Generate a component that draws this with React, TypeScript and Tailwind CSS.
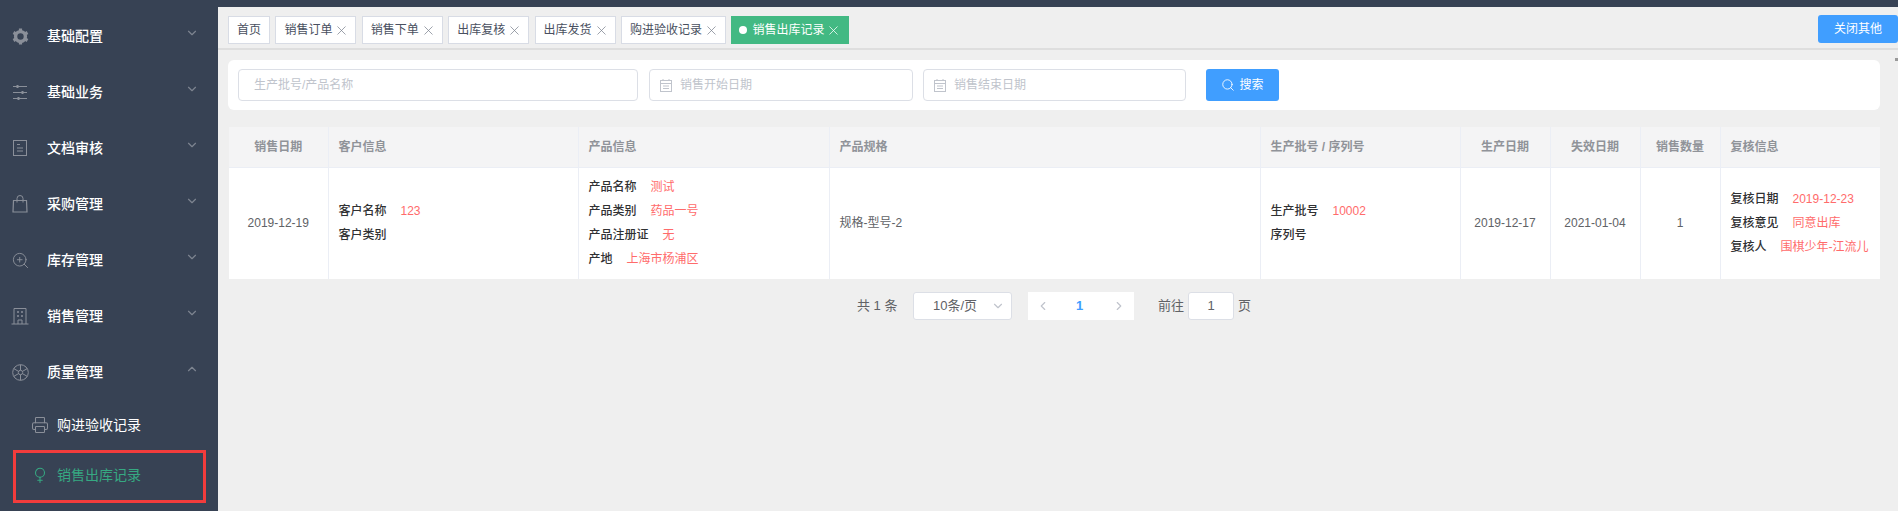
import React from 'react';
import { ChevronDown, ChevronUp, ChevronLeft, ChevronRight, X, Search, ZoomIn, Printer, Venus } from 'lucide-react';

const iconColor = '#8a8f99';

const GearIcon = () => (
  <svg width="17" height="17" viewBox="0 0 17 17" fill="none" stroke={iconColor}>
    <circle cx="8.5" cy="8.5" r="4.9" strokeWidth="3.4" />
    <path d="M8.500 0.500v2.500M8.500 14v2.500M1.500 4.500l2.200 1.300M13.300 11.200l2.200 1.300M1.500 12.500l2.200-1.300M13.300 5.800l2.200-1.300" strokeWidth="3.2" />
  </svg>
);

const SlidersIcon = () => (
  <svg width="16" height="16" viewBox="0 0 16 16" fill="none" stroke={iconColor} strokeWidth="1">
    <path d="M1 2.500h14M1 8.500h14M1 14.500h14" />
    <path d="M5.500 1v3M10.500 7v3M6.500 13v3" strokeWidth="2" />
  </svg>
);

const DocIcon = () => (
  <svg width="16" height="16" viewBox="0 0 16 16" fill="none" stroke={iconColor} strokeWidth="1">
    <rect x="1.500" y="0.500" width="13" height="15" />
    <path d="M5 4.500h3M5 8h6M5 11h6" />
  </svg>
);

const BagIcon = () => (
  <svg width="16" height="18" viewBox="0 0 16 18" fill="none" stroke={iconColor} strokeWidth="1.200">
    <path d="M1.500 5.500h13l.5 11.500H1z" />
    <path d="M5 7.500V3.500a3 3 0 0 1 6 0v4" strokeWidth="1" />
  </svg>
);

const BuildingIcon = () => (
  <svg width="18" height="18" viewBox="0 0 18 18" fill="none" stroke={iconColor} strokeWidth="1">
    <path d="M3 17V1.500h12V17M0.500 17h17M7 17v-4h4v4" />
    <path d="M6 5h2M10 5h2M6 9h2M10 9h2" strokeWidth="1.600" />
  </svg>
);

const WheelIcon = () => (
  <svg width="17" height="17" viewBox="0 0 17 17" fill="none" stroke={iconColor} strokeWidth="1">
    <circle cx="8.500" cy="8.500" r="7.800" />
    <circle cx="8.500" cy="8.500" r="2.200" />
    <path d="M8.500 0.700v5.600M8.500 10.700v5.600M1.700 4.600l4.900 2.800M10.400 9.600l4.900 2.800M1.700 12.400l4.900-2.800M10.400 7.400l4.900-2.800" />
  </svg>
);

const CalendarIcon = () => (
  <svg width="12" height="13" viewBox="0 0 12 13" fill="none" stroke="#c0c4cc" strokeWidth="1">
    <rect x="0.500" y="1.500" width="11" height="11" />
    <path d="M0.500 4.500h11M3 7h6M3 9.500h6" />
    <path d="M3 0v2M9 0v2" />
  </svg>
);

const menus = [
  { name: '基础配置', icon: <GearIcon /> },
  { name: '基础业务', icon: <SlidersIcon /> },
  { name: '文档审核', icon: <DocIcon /> },
  { name: '采购管理', icon: <BagIcon /> },
  { name: '库存管理', icon: <ZoomIn size={19} color={iconColor} strokeWidth={1.2} /> },
  { name: '销售管理', icon: <BuildingIcon /> },
  { name: '质量管理', icon: <WheelIcon />, open: true },
];

const tabs = ['销售订单', '销售下单', '出库复核', '出库发货', '购进验收记录'];

const Info = ({ rows }: { rows: [string, string][] }) => (
  <div>
    {rows.map(([label, value]) => (
      <div key={label} className="h-6 leading-6 text-[#303133] font-medium whitespace-nowrap">
        {label}
        {value && <span className="ml-[14px] font-normal text-[#ff6b6b]">{value}</span>}
      </div>
    ))}
  </div>
);

const Sidebar = () => (
  <aside className="relative w-[218px] shrink-0 bg-[#374254] pt-2">
    {menus.map(m => (
      <div key={m.name} className="flex h-14 items-center text-sm text-white">
        <span className="flex w-[47px] shrink-0 justify-center pr-[7px]">{m.icon}</span>
        <span className="flex-1 font-medium">{m.name}</span>
        {m.open
          ? <ChevronUp size={14} color="#7d8490" className="mr-[19px] -mt-[7px]" />
          : <ChevronDown size={14} color="#7d8490" className="mr-[19px] -mt-[7px]" />}
      </div>
    ))}
    <div className="flex h-[50px] items-center pl-[31px] text-sm text-white">
      <Printer size={18} color={iconColor} strokeWidth={1.4} className="mr-2" />
      购进验收记录
    </div>
    <div className="flex h-[50px] items-center pl-[31px] text-sm text-[#36a982]">
      <Venus size={18} color="#36a982" strokeWidth={1.4} className="mr-2" />
      销售出库记录
    </div>
    <div className="absolute left-[13px] top-[450px] h-[53px] w-[193px] border-[3px] border-[#f23c3c]" />
  </aside>
);

const DateBox = ({ text, className }: { text: string; className: string }) => (
  <div className={`flex h-8 items-center rounded border border-[#dcdfe6] pl-[10px] text-[#c0c4cc] ${className}`}>
    <CalendarIcon />
    <span className="ml-2">{text}</span>
  </div>
);

const thBase = 'border-r border-b border-[#ebeef5] font-bold text-[#909399] last:border-r-0';
const tdBase = 'border-r border-[#ebeef5] text-[#606266] last:border-r-0';

export default function App() {
  return (
    <div className="flex h-[511px] overflow-hidden bg-[#efefef] text-xs [font-family:'Liberation_Sans','Noto_Sans_CJK_SC',sans-serif]">
      <Sidebar />
      <main className="relative min-w-0 flex-1">
        <div className="h-[7px] bg-[#374254]" />
        <div className="flex h-[43px] items-start justify-between border-b-2 border-[#dedede] pl-[10px] pt-[9px]">
          <div className="flex gap-[5.4px]">
            <div className="flex h-7 w-[42px] items-center justify-center border border-[#d8dce5] bg-white text-[#495060]">首页</div>
            {tabs.map(t => (
              <div key={t} className="flex h-7 items-center border border-[#d8dce5] bg-white px-2 text-[#495060]">
                {t}
                <X size={15} color="#7d8490" strokeWidth={1.2} className="-mx-[2px] ml-[2px]" />
              </div>
            ))}
            <div className="flex h-7 w-[118px] items-center bg-[#42b983] pl-2 text-white">
              <span className="mr-[5px] h-2 w-2 rounded-full bg-white" />
              销售出库记录
              <X size={15} color="#fff" strokeWidth={1.2} className="ml-[2px]" />
            </div>
          </div>
          <button className="-mt-px h-7 w-20 rounded-[3px] bg-[#409eff] text-white">关闭其他</button>
        </div>

        <div className="pl-[10px] pr-[18px]">
          <div className="mt-[10px] flex h-[50px] items-center rounded-md bg-white px-[10px]">
            <div className="flex h-8 w-[400px] items-center rounded border border-[#dcdfe6] pl-[15px] text-[#c0c4cc]">生产批号/产品名称</div>
            <DateBox text="销售开始日期" className="ml-[11px] w-[264px]" />
            <DateBox text="销售结束日期" className="ml-[10px] w-[263px]" />
            <button className="ml-5 flex h-8 w-[73px] items-center justify-center rounded-[3px] bg-[#409eff] text-white">
              <Search size={14} strokeWidth={1.5} className="mr-1" />
              搜索
            </button>
          </div>

          <table className="ml-px mt-[17px] w-[calc(100%-1px)] table-fixed border-collapse bg-white">
            <colgroup>
              <col className="w-[99px]" />
              <col className="w-[250px]" />
              <col className="w-[251px]" />
              <col className="w-[431px]" />
              <col className="w-[200px]" />
              <col className="w-[90px]" />
              <col className="w-[90px]" />
              <col className="w-[80px]" />
              <col className="w-[160px]" />
            </colgroup>
            <thead>
              <tr className="h-10 bg-[#f4f4f5]">
                <th className={`${thBase} text-center`}>销售日期</th>
                <th className={`${thBase} pl-[10px] text-left`}>客户信息</th>
                <th className={`${thBase} pl-[10px] text-left`}>产品信息</th>
                <th className={`${thBase} pl-[10px] text-left`}>产品规格</th>
                <th className={`${thBase} pl-[10px] text-left`}>生产批号 / 序列号</th>
                <th className={`${thBase} text-center`}>生产日期</th>
                <th className={`${thBase} text-center`}>失效日期</th>
                <th className={`${thBase} text-center`}>销售数量</th>
                <th className={`${thBase} pl-[10px] text-left`}>复核信息</th>
              </tr>
            </thead>
            <tbody>
              <tr className="h-[112px]">
                <td className={`${tdBase} text-center`}>2019-12-19</td>
                <td className={`${tdBase} pl-[10px]`}>
                  <Info rows={[['客户名称', '123'], ['客户类别', '']]} />
                </td>
                <td className={`${tdBase} pl-[10px]`}>
                  <Info rows={[['产品名称', '测试'], ['产品类别', '药品一号'], ['产品注册证', '无'], ['产地', '上海市杨浦区']]} />
                </td>
                <td className={`${tdBase} pl-[10px]`}>规格-型号-2</td>
                <td className={`${tdBase} pl-[10px]`}>
                  <Info rows={[['生产批号', '10002'], ['序列号', '']]} />
                </td>
                <td className={`${tdBase} text-center`}>2019-12-17</td>
                <td className={`${tdBase} text-center`}>2021-01-04</td>
                <td className={`${tdBase} text-center`}>1</td>
                <td className={`${tdBase} pl-[10px]`}>
                  <Info rows={[['复核日期', '2019-12-23'], ['复核意见', '同意出库'], ['复核人', '围棋少年-江流儿']]} />
                </td>
              </tr>
            </tbody>
          </table>

          <div className="mt-[13px] flex h-7 items-center pl-[629px] text-[13px] text-[#606266]">
            <span className="w-[56px] whitespace-nowrap">共 1 条</span>
            <div className="flex h-7 w-[99px] items-center rounded-[3px] border border-[#dcdfe6] bg-white pl-[19px] pr-[6px]">
              <span className="flex-1">10条/页</span>
              <ChevronDown size={14} color="#c0c4cc" />
            </div>
            <div className="ml-4 flex h-7 w-[106px] items-center justify-between bg-white px-2">
              <ChevronLeft size={14} color="#c0c4cc" />
              <span className="pr-[3px] font-bold text-[#409eff]">1</span>
              <ChevronRight size={14} color="#c0c4cc" />
            </div>
            <span className="ml-6">前往</span>
            <div className="ml-[4px] flex h-7 w-[46px] items-center justify-center rounded-[3px] border border-[#dcdfe6] bg-white">1</div>
            <span className="ml-1">页</span>
          </div>
        </div>
        <div className="absolute right-0 top-[58px] h-[3px] w-[3px] bg-[#999]" />
      </main>
    </div>
  );
}
